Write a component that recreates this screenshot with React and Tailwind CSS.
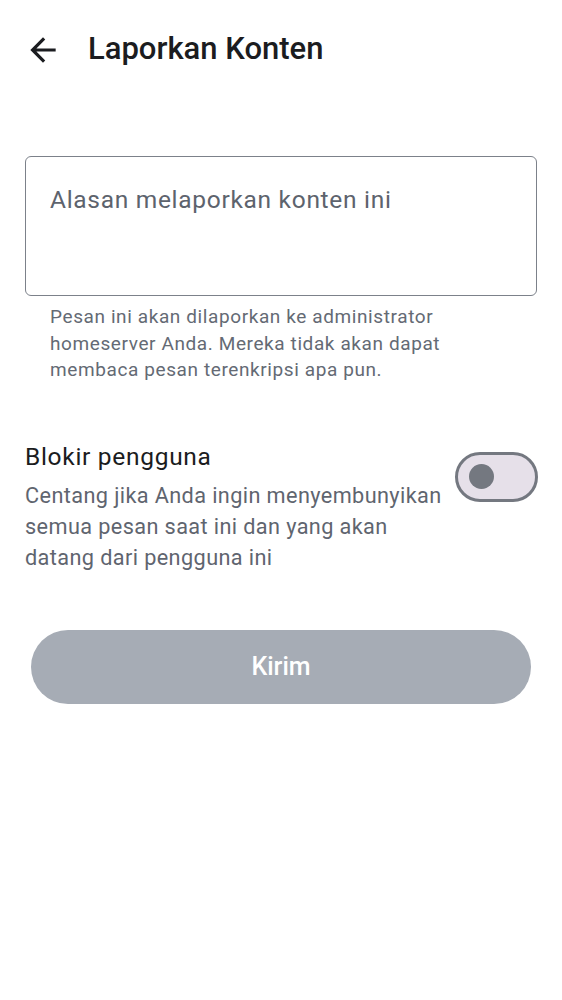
import { useState } from 'react'

const BackArrow = () => (
  <svg width="38" height="38" viewBox="0 0 24 24" fill="#1b1c20">
    <path d="M20 11H7.83l5.59-5.59L12 4l-8 8 8 8 1.41-1.41L7.83 13H20v-2z" />
  </svg>
)

const App = () => {
  const [blocked, setBlocked] = useState(false)

  return (
    <div className="min-h-[1000px] w-[562px] bg-white font-['Roboto','Liberation_Sans',sans-serif]">
      <div className="flex items-center h-[100px] pl-[24px] pb-[1px]">
        <BackArrow />
        <h1 className="ml-[26px] text-[31px] font-medium text-[#1b1c20]">Laporkan Konten</h1>
      </div>

      <div className="px-[25px] pt-[56px]">
        <div className="h-[140px] rounded-[6px] border-[1.5px] border-[#7c818a] px-[24px] pt-[28px]">
          <p className="text-[24.5px] leading-[30px] tracking-[0.7px] text-[#5d636d]">Alasan melaporkan konten ini</p>
        </div>
        <p className="mt-[8px] px-[25px] whitespace-nowrap text-[19px] leading-[26.5px] tracking-[0.6px] text-[#646a74]">
          Pesan ini akan dilaporkan ke administrator
          <br />
          homeserver Anda. Mereka tidak akan dapat
          <br />
          membaca pesan terenkripsi apa pun.
        </p>
      </div>

      <div className="flex items-start justify-between px-[25px] pt-[58px]">
        <div>
          <p className="text-[24.5px] leading-[30px] tracking-[0.7px] text-[#1b1c20]">Blokir pengguna</p>
          <p className="mt-[8px] whitespace-nowrap text-[21.7px] leading-[31px] tracking-[0.39px] text-[#5f656f]">
            Centang jika Anda ingin menyembunyikan
            <br />
            semua pesan saat ini dan yang akan
            <br />
            datang dari pengguna ini
          </p>
        </div>
        <button
          onClick={() => setBlocked(!blocked)}
          className="mt-[10px] mr-[-1px] flex h-[50px] w-[83px] shrink-0 items-center rounded-full border-[3px] border-[#747880] bg-[#e6e0e9] pl-[11px]"
        >
          <span className="block h-[25px] w-[25px] rounded-full bg-[#747880]" />
        </button>
      </div>

      <div className="px-[31px] pt-[57px]">
        <button className="flex h-[74px] w-full items-center justify-center rounded-full bg-[#a6acb5] text-[25px] font-medium text-white">
          Kirim
        </button>
      </div>
    </div>
  )
}

export default App
